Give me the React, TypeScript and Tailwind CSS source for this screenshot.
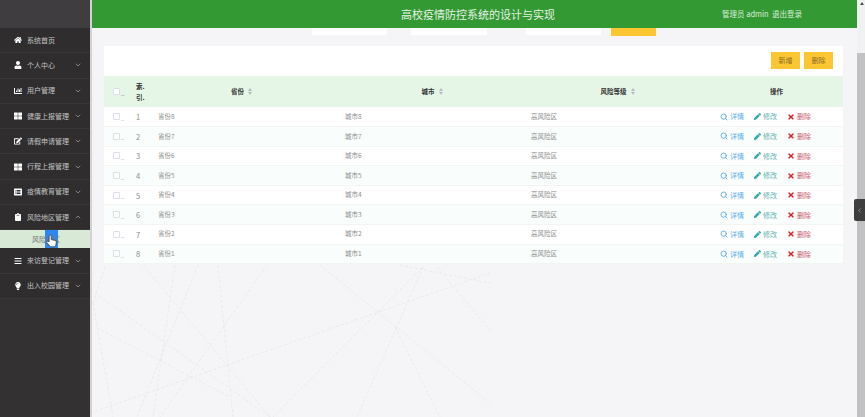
import { FaBars, FaChartBar, FaClipboard, FaEdit, FaHome, FaLightbulb, FaListAlt, FaPen, FaThLarge, FaTimes, FaUser } from "react-icons/fa";
import { ChevronDown, ChevronLeft, ChevronUp, Search } from "lucide-react";

const MENU = [
  { label: "系统首页", icon: FaHome },
  { label: "个人中心", icon: FaUser, arrow: true },
  { label: "用户管理", icon: FaChartBar, arrow: true },
  { label: "健康上报管理", icon: FaThLarge, arrow: true },
  { label: "请假申请管理", icon: FaEdit, arrow: true },
  { label: "行程上报管理", icon: FaThLarge, arrow: true },
  { label: "疫情教育管理", icon: FaListAlt, arrow: true },
  { label: "风险地区管理", icon: FaClipboard, arrow: true, open: true },
  { label: "来访登记管理", icon: FaBars, arrow: true },
  { label: "出入校园管理", icon: FaLightbulb, arrow: true },
];

const ROWS = [8, 7, 6, 5, 4, 3, 2, 1];

// background dashes, read off the reference
const LINES = [
  [143, 265, 270, 417],
  [175, 265, 153, 417],
  [198, 265, 137, 417],
  [218, 265, 233, 417],
  [267, 265, 160, 417],
  [320, 265, 490, 403],
  [423, 267, 273, 417],
  [423, 267, 357, 417],
  [490, 273, 90, 413],
  [95, 293, 270, 417],
  [97, 328, 230, 397],
  [105, 267, 93, 303],
  [93, 303, 113, 417],
  [400, 265, 490, 283],
  [395, 327, 440, 417],
  [437, 267, 490, 330],
];

function SortIcon() {
  return (
    <span className="inline-flex flex-col ml-[4px] align-middle gap-[1px]">
      <span className="block w-0 h-0 border-x-[2px] border-x-transparent border-b-[3px] border-b-[#b5b9c0]" />
      <span className="block w-0 h-0 border-x-[2px] border-x-transparent border-t-[3px] border-t-[#b5b9c0]" />
    </span>
  );
}

function CheckBox() {
  return (
    <span className="flex items-center gap-[1px]">
      <span className="block w-[7px] h-[7px] bg-white border border-[#dcdfe6] rounded-[1px]" />
      <span className="text-[5px] leading-none text-[#999] mt-[3px]">..</span>
    </span>
  );
}

export default function App() {
  return (
    <div className="relative flex w-[865px] h-[417px] overflow-hidden bg-[#f5f5f8] font-['Noto_Sans_CJK_SC','Liberation_Sans',sans-serif]">
      <svg className="absolute left-0 top-0 w-[865px] h-[417px]" viewBox="0 0 865 417">
        {LINES.map((l, i) => (
          <line key={i} x1={l[0]} y1={l[1]} x2={l[2]} y2={l[3]} stroke="#e4e4e8" strokeWidth="0.7" strokeDasharray="3 2" />
        ))}
      </svg>

      {/* Sidebar */}
      <aside className="relative w-[90px] shrink-0 h-full bg-[#333132] border-r-0">
        <div className="h-[28px] bg-[#3f3d3f]" />
        {MENU.map((m) => {
          const Icon = m.icon;
          return (
            <div key={m.label}>
              <div className="flex items-center h-[25.3px] pl-[14px] border-b border-[#383637] bg-[#2f2d2e]">
                <Icon className="w-[8px] h-[8px] text-white shrink-0" />
                <span className="ml-[5px] text-[7px] leading-none text-[#c4c4c4] whitespace-nowrap">{m.label}</span>
                {m.arrow && (m.open
                  ? <ChevronUp className="absolute left-[74px] w-[8px] h-[8px] text-[#aaa]" />
                  : <ChevronDown className="absolute left-[74px] w-[8px] h-[8px] text-[#aaa]" />)}
              </div>
              {m.open && (
                <div className="relative flex items-center h-[18px] pl-[32px] bg-[#d8e9d6] text-[7px] text-[#777] whitespace-nowrap">
                  <span className="absolute left-[45px] top-0 w-[13px] h-[18px] bg-[#2f86ee]" />
                  <span className="relative">风险地区</span>
                  <svg className="absolute left-[46px] top-[4px] w-[11px] h-[14px]" viewBox="0 0 11 14">
                    <path d="M3.2 7.5V2a1 1 0 0 1 2 0v3.6l4 .8c.8.2 1.2.8 1.1 1.6l-.5 3.2c-.1.9-.8 1.6-1.7 1.6H5.2c-.6 0-1.1-.3-1.5-.8L.8 8.6c-.5-.7.4-1.6 1.1-1.1z" fill="#fff" stroke="#333" strokeWidth="0.7" />
                  </svg>
                </div>
              )}
            </div>
          );
        })}
      </aside>
      <div className="relative w-[2px] shrink-0 bg-[#d2d2d4]" />

      {/* Main column */}
      <main className="relative flex-1 flex flex-col min-w-0 pr-[8px]">
        <header className="relative flex items-center h-[28px] bg-[#339933] shrink-0">
          <span className="absolute left-[309px] top-[6px] text-[11px] leading-[16px] text-[#e6f2e6] whitespace-nowrap">高校疫情防控系统的设计与实现</span>
          <span className="absolute left-[630px] top-[8px] text-[7.5px] leading-[11px] text-[#dcecdc] whitespace-nowrap">管理员 admin</span>
          <span className="absolute left-[680px] top-[8px] text-[7.5px] leading-[11px] text-[#dcecdc] whitespace-nowrap">退出登录</span>
        </header>

        <div className="flex h-[8px] overflow-hidden items-start pl-[220px] shrink-0">
          <div className="w-[75px] h-[7px] bg-white" />
          <div className="w-[76px] h-[7px] bg-white ml-[24px]" />
          <div className="w-[75px] h-[7px] bg-white ml-[39px]" />
          <div className="w-[45px] h-[8px] bg-[#fcc633] ml-[10px]" />
        </div>

        <section className="relative ml-[12px] mr-[14px] mt-[10px] bg-white">
          <div className="flex justify-end gap-[4px] h-[30px] pt-[6px] pr-[10px]">
            <button className="w-[29px] h-[17px] bg-[#fcc633] text-[7px] text-[#8a6d2a]">新增</button>
            <button className="w-[29px] h-[17px] bg-[#fcc633] text-[7px] text-[#8a6d2a]">删除</button>
          </div>
          <table className="w-[739px] table-fixed border-collapse text-[6.5px]">
            <colgroup>
              <col className="w-[26px]" />
              <col className="w-[22px]" />
              <col className="w-[187px]" />
              <col className="w-[186px]" />
              <col className="w-[185px]" />
              <col className="w-[133px]" />
            </colgroup>
            <thead>
              <tr className="h-[31px] bg-[#e6f6e6] text-[#333] font-bold">
                <th className="pl-[9px]"><CheckBox /></th>
                <th className="text-left pl-[6px] leading-[11px]">索.<br />引.</th>
                <th className="text-center pr-[8px]">省份<SortIcon /></th>
                <th className="text-center">城市<SortIcon /></th>
                <th className="text-center">风险等级<SortIcon /></th>
                <th className="text-center">操作</th>
              </tr>
            </thead>
            <tbody>
              {ROWS.map((n, i) => (
                <tr key={n} className={`h-[19.6px] border-b border-[#f2f5f2] text-[#8d8d8d] ${i % 2 === 0 ? "bg-white" : "bg-[#f9fdfb]"}`}>
                  <td className="pl-[9px]"><CheckBox /></td>
                  <td className="pl-[6px] text-[7.5px]">{i + 1}</td>
                  <td className="pl-[6px]">省份{n}</td>
                  <td className="pl-[6px]">城市{n}</td>
                  <td className="pl-[6px]">高风险区</td>
                  <td className="pl-[10px]">
                    <div className="flex items-center text-[7px]">
                      <Search className="w-[8px] h-[8px] text-[#4ea5e6]" strokeWidth={2.5} />
                      <span className="ml-[2px] text-[#5aaee8]">详情</span>
                      <FaPen className="ml-[10px] w-[7px] h-[7px] text-[#33a9a9]" />
                      <span className="ml-[2px] text-[#5fb3b3]">修改</span>
                      <FaTimes className="ml-[10px] w-[8px] h-[8px] text-[#d9202a]" />
                      <span className="ml-[2px] text-[#c9566a]">删除</span>
                    </div>
                  </td>
                </tr>
              ))}
            </tbody>
          </table>
        </section>
      </main>

      {/* Scrollbar and side tab */}
      <div className="absolute right-0 top-0 w-[8px] h-full bg-[#f1f1f1]">
        <div className="absolute left-[3px] top-[2px] w-0 h-0 border-x-[2px] border-x-transparent border-b-[3px] border-b-[#505050]" />
        <div className="absolute left-0 top-[53px] w-[8px] h-[364px] bg-[#c1c1c1]" />
      </div>
      <div className="absolute right-0 top-[199px] flex items-center justify-center w-[11px] h-[22px] bg-[#3e3e3e] rounded-l-[2px]">
        <ChevronLeft className="w-[7px] h-[7px] text-[#bbb]" />
      </div>
    </div>
  );
}
